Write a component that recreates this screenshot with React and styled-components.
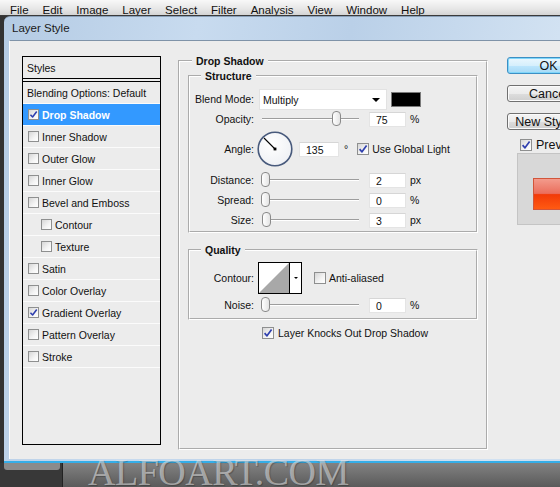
import styled, { createGlobalStyle } from "styled-components";

const GlobalStyle = createGlobalStyle`
  html, body {
    margin: 0;
    padding: 0;
  }
  body {
    width: 560px;
    height: 487px;
    overflow: hidden;
    background: #2d2d2d;
    font-family: "Liberation Sans", Arial, sans-serif;
  }
`;

const Screen = styled.div`
  position: relative;
  width: 560px;
  height: 487px;
  overflow: hidden;
  display: flex;
  flex-direction: column;
  background: #333;
`;

const MenuBar = styled.div`
  flex-shrink: 0;
  height: 15px;
  display: flex;
  gap: 14px;
  padding-left: 10px;
  overflow: hidden;
  background: linear-gradient(#f8f8f8, #e6e6e6 60%, #d4d4d4);
  border-bottom: 1px solid #3a3a3a;
  font-size: 11.5px;
  color: #111;
`;

const MenuItem = styled.span`
  padding-top: 4px;
  line-height: 12px;
`;

const Window = styled.div`
  flex-shrink: 0;
  margin-left: 4px;
  width: 620px;
  height: 447px;
  box-sizing: border-box;
  display: flex;
  flex-direction: column;
  padding: 0 0 2px 5px;
  border-radius: 6px 6px 0 0;
  border-top: 1px solid #8aa0b8;
  border-bottom: 2px solid #35aee8;
  background: linear-gradient(100deg, #b4cbe4 0%, #c8dbef 28%, #bad0e8 50%, #d2e2f2 80%, #c4d8ec 100%);
`;

const TitleBar = styled.div`
  height: 23px;
  display: flex;
  align-items: center;
  padding: 0 0 2px 3px;
  box-sizing: border-box;
  font-size: 11.5px;
  color: #1a1a1a;
`;

const Body = styled.div`
  flex: 1;
  display: flex;
  align-items: flex-start;
  padding: 14px 0 0 12px;
  background: #ececec;
  border-top: 1px solid #7f93a8;
  border-left: 1px solid #fdfdfd;
  font-size: 10.5px;
  color: #111;
`;

/* ---- styles list ---- */

const StylesPanel = styled.div`
  width: 139px;
  height: 389px;
  margin-top: 1px;
  box-sizing: border-box;
  border: 1px solid #000;
  display: flex;
  flex-direction: column;
`;

const StylesHeader = styled.div`
  height: 21px;
  display: flex;
  align-items: center;
  padding-left: 4px;
  border-bottom: 1px solid #000;
  margin-bottom: 2px;
`;

const StyleList = styled.div`
  flex: 1;
  border-top: 1px solid #000;
`;

const StyleRow = styled.div`
  height: 21px;
  display: flex;
  align-items: center;
  gap: 3px;
  padding-left: ${(p) => (p.$indent ? 18 : p.$plain ? 4 : 5)}px;
  border-bottom: 1px solid #fbfbfb;
  background: ${(p) => (p.$selected ? "#3399ff" : "transparent")};
  color: ${(p) => (p.$selected ? "#fff" : "#111")};
  font-weight: ${(p) => (p.$selected ? "bold" : "normal")};
`;

const Box = styled.span`
  flex-shrink: 0;
  width: ${(p) => p.$size}px;
  height: ${(p) => p.$size}px;
  box-sizing: border-box;
  border: 1px solid #8e8f8f;
  background: linear-gradient(135deg, #d6d6d6, #f4f4f4 60%, #ffffff);
  display: flex;
  align-items: center;
  justify-content: center;
`;

const Check = ({ checked, size = 12 }) => (
  <Box $size={size}>
    {checked && (
      <svg width={size - 2} height={size - 2} viewBox="0 0 10 10">
        <path
          d="M1.6 5.2 L4 7.8 L8.6 1.6"
          fill="none"
          stroke="#2f3fae"
          strokeWidth="1.7"
          strokeLinejoin="round"
        />
      </svg>
    )}
  </Box>
);

/* ---- groups ---- */

const Group = styled.fieldset`
  margin: ${(p) => p.$margin || "0"};
  padding: 0;
  min-width: 0;
  box-sizing: border-box;
  border: 2px groove #fff;
`;

const MainGroup = styled(Group)`
  width: 310px;
  height: 395px;
  margin-left: 17px;
`;

const Legend = styled.legend`
  margin-left: ${(p) => p.$offset}px;
  padding: 0 4px;
  line-height: 12px;
  font-weight: bold;
  color: #111;
`;

const GroupContent = styled.div`
  padding: ${(p) => p.$pad};
`;

const Row = styled.div`
  display: flex;
  align-items: center;
  height: ${(p) => p.$h}px;
  margin-top: ${(p) => p.$mt || 0}px;
`;

const Label = styled.span`
  width: 64px;
  flex-shrink: 0;
  text-align: right;
`;

const Select = styled.div`
  width: 128px;
  height: 21px;
  margin-left: 5px;
  box-sizing: border-box;
  display: flex;
  align-items: center;
  justify-content: space-between;
  padding: 1px 6px 0 3px;
  background: #fff;
  border: 1px solid #e2e2e2;
`;

const Arrow = styled.span`
  width: 0;
  height: 0;
  border-left: ${(p) => p.$w}px solid transparent;
  border-right: ${(p) => p.$w}px solid transparent;
  border-top: ${(p) => p.$w}px solid #000;
`;

const Swatch = styled.span`
  width: 30px;
  height: 15px;
  margin-left: 4px;
  box-sizing: border-box;
  background: #000;
  border: 1px solid #7a7a7a;
`;

const SliderWrap = styled.div`
  position: relative;
  width: 102px;
  height: 18px;
  margin-left: 5px;
  display: flex;
  align-items: center;
`;

const Track = styled.div`
  flex: 1;
  margin: 0 2px 0 3px;
  height: 1px;
  background: #9d9d9d;
  border-bottom: 1px solid #fff;
`;

const Thumb = styled.span`
  position: absolute;
  top: 1px;
  width: 9px;
  height: 15px;
  box-sizing: border-box;
  border: 1px solid #8a8a8a;
  border-radius: 4px;
  background: linear-gradient(90deg, #ffffff, #e4e4e4);
`;

const Slider = ({ pct }) => (
  <SliderWrap>
    <Track />
    <Thumb style={{ left: 2 + pct * 95 }} />
  </SliderWrap>
);

const ValueBox = styled.input`
  width: ${(p) => p.$w}px;
  height: 15px;
  margin-left: ${(p) => p.$ml}px;
  box-sizing: border-box;
  padding: 1px 0 0 6px;
  border: 1px solid #e4e4e4;
  border-top-color: #d6d6d6;
  background: #fff;
  font-family: inherit;
  font-size: 10.5px;
  color: #111;
  outline: none;
`;

const Unit = styled.span`
  margin-left: ${(p) => p.$ml || 4}px;
`;

const Dial = styled.svg`
  margin-left: 3px;
  flex-shrink: 0;
`;

const CheckLabel = styled.span`
  display: flex;
  align-items: center;
  gap: ${(p) => p.$gap || 3}px;
  margin-left: ${(p) => p.$ml || 0}px;
`;

const ContourBox = styled.div`
  display: flex;
  height: 32px;
  margin-left: 4px;
  box-sizing: border-box;
  border: 1px solid #000;
  background: #fff;
`;

const ContourPick = styled.div`
  width: 11px;
  display: flex;
  align-items: center;
  justify-content: center;
  border-left: 1px solid #000;
`;

/* ---- buttons ---- */

const ButtonColumn = styled.div`
  width: 83px;
  margin-left: 19px;
  margin-top: 2px;
  display: flex;
  flex-direction: column;
  gap: 11px;
`;

const Button = styled.div`
  height: 17px;
  box-sizing: border-box;
  display: flex;
  align-items: center;
  justify-content: center;
  border-radius: 3px;
  font-size: 12.5px;
  color: #111;
  border: 1px solid ${(p) => (p.$primary ? "#3c8fc4" : "#707070")};
  background: ${(p) =>
    p.$primary
      ? "linear-gradient(#eaf7fe, #d6effc 50%, #bde6fd 51%, #a6d9f5)"
      : "linear-gradient(#f4f4f4, #ebebeb 50%, #dddddd 51%, #cfcfcf)"};
  box-shadow: ${(p) => (p.$primary ? "inset 0 0 0 1px #7fd6fa" : "inset 0 0 0 1px #fbfbfb")};
`;

const PreviewRow = styled.div`
  margin-top: -3px;
  padding-left: 13px;
  font-size: 12.5px;
`;

const PreviewBox = styled.div`
  margin: -10px 0 0 10px;
  width: 80px;
  height: 72px;
  box-sizing: border-box;
  padding: 24px 0 0 15px;
  background: #d8d8d8;
  border: 1px solid #c4c4c4;
`;

const PreviewSwatch = styled.div`
  width: 60px;
  height: 32px;
  box-sizing: border-box;
  border: 1px solid #d2553a;
  background: linear-gradient(#f39b8c 0%, #eb6e5c 48%, #f23a08 52%, #ff5a12 100%);
`;

/* ---- workspace below ---- */

const BottomStrip = styled.div`
  flex: 1;
  display: flex;
`;

const Dock = styled.div`
  width: 62px;
  background: #383838;
  border-right: 1px solid #222;
`;

const DockTab = styled.div`
  height: 7px;
  margin: 0 2px 0 4px;
  border-radius: 0 0 3px 3px;
  background: #8b8b8b;
`;

const Canvas = styled.div`
  flex: 1;
  background: linear-gradient(#828282, #5a5a5a);
`;

const Watermark = styled.div`
  position: absolute;
  left: 88px;
  top: 450px;
  font-family: "Liberation Serif", "Times New Roman", serif;
  font-size: 38px;
  letter-spacing: -0.5px;
  color: rgba(235, 235, 235, 0.55);
  text-shadow: 1px 1px 1px rgba(0, 0, 0, 0.25);
  pointer-events: none;
`;

const menus = ["File", "Edit", "Image", "Layer", "Select", "Filter", "Analysis", "View", "Window", "Help"];

const styles = [
  { name: "Drop Shadow", checked: true, selected: true },
  { name: "Inner Shadow" },
  { name: "Outer Glow" },
  { name: "Inner Glow" },
  { name: "Bevel and Emboss" },
  { name: "Contour", indent: true },
  { name: "Texture", indent: true },
  { name: "Satin" },
  { name: "Color Overlay" },
  { name: "Gradient Overlay", checked: true },
  { name: "Pattern Overlay" },
  { name: "Stroke" },
];

const sliders = [
  { label: "Distance:", value: "2", unit: "px", pct: 0, mt: 3 },
  { label: "Spread:", value: "0", unit: "%", pct: 0, mt: 2 },
  { label: "Size:", value: "3", unit: "px", pct: 0.012, mt: 2 },
];

const App = () => {
  return (
    <Screen>
      <GlobalStyle />
      <MenuBar>
        {menus.map((m) => (
          <MenuItem key={m}>{m}</MenuItem>
        ))}
      </MenuBar>

      <Window>
        <TitleBar>Layer Style</TitleBar>
        <Body>
          <StylesPanel>
            <StylesHeader>Styles</StylesHeader>
            <StyleList>
              <StyleRow $plain>Blending Options: Default</StyleRow>
              {styles.map((s) => (
                <StyleRow key={s.name} $indent={s.indent} $selected={s.selected}>
                  <Check checked={s.checked} size={11} />
                  {s.name}
                </StyleRow>
              ))}
            </StyleList>
          </StylesPanel>

          <MainGroup>
            <Legend $offset={12}>Drop Shadow</Legend>
            <GroupContent $pad="3px 8px 0 8px">
              <Group>
                <Legend $offset={11}>Structure</Legend>
                <GroupContent $pad="0 0 2px 0">
                  <Row $h={22} $mt={6}>
                    <Label>Blend Mode:</Label>
                    <Select>
                      Multiply
                      <Arrow $w={4} />
                    </Select>
                    <Swatch />
                  </Row>
                  <Row $h={18}>
                    <Label>Opacity:</Label>
                    <Slider pct={0.75} />
                    <ValueBox readOnly value="75" $w={37} $ml={8} />
                    <Unit>%</Unit>
                  </Row>
                  <Row $h={38} $mt={2}>
                    <Label>Angle:</Label>
                    <Dial width="36" height="36" viewBox="0 0 36 36">
                      <defs>
                        <radialGradient id="dialFill" cx="0.4" cy="0.35" r="0.7">
                          <stop offset="0" stopColor="#ffffff" />
                          <stop offset="1" stopColor="#eef0f4" />
                        </radialGradient>
                      </defs>
                      <circle cx="18" cy="18" r="16.8" fill="url(#dialFill)" stroke="#485a7c" strokeWidth="1.6" />
                      <line x1="18" y1="18" x2="7" y2="7" stroke="#000" strokeWidth="1.1" />
                      <rect x="16.6" y="16.6" width="2.8" height="2.8" fill="#000" />
                    </Dial>
                    <ValueBox readOnly value="135" $w={40} $ml={6} />
                    <Unit $ml={5}>°</Unit>
                    <CheckLabel $ml={9}>
                      <Check checked />
                      Use Global Light
                    </CheckLabel>
                  </Row>
                  {sliders.map((s) => (
                    <Row key={s.label} $h={18} $mt={s.mt}>
                      <Label>{s.label}</Label>
                      <Slider pct={s.pct} />
                      <ValueBox readOnly value={s.value} $w={37} $ml={8} />
                      <Unit>{s.unit}</Unit>
                    </Row>
                  ))}
                </GroupContent>
              </Group>

              <Group $margin="11px 0 0 0">
                <Legend $offset={11}>Quality</Legend>
                <GroupContent $pad="0 0 5px 0">
                  <Row $h={32} $mt={6}>
                    <Label>Contour:</Label>
                    <ContourBox>
                      <svg width="30" height="30" viewBox="0 0 30 30">
                        <polygon points="0,30 30,0 30,30" fill="#a8a8a8" />
                      </svg>
                      <ContourPick>
                        <Arrow $w={2.5} />
                      </ContourPick>
                    </ContourBox>
                    <CheckLabel $ml={12}>
                      <Check />
                      Anti-aliased
                    </CheckLabel>
                  </Row>
                  <Row $h={16} $mt={3}>
                    <Label>Noise:</Label>
                    <Slider pct={0} />
                    <ValueBox readOnly value="0" $w={37} $ml={8} />
                    <Unit>%</Unit>
                  </Row>
                </GroupContent>
              </Group>

              <Row $h={12} $mt={7}>
                <CheckLabel $ml={74} $gap={4}>
                  <Check checked />
                  Layer Knocks Out Drop Shadow
                </CheckLabel>
              </Row>
            </GroupContent>
          </MainGroup>

          <ButtonColumn>
            <Button $primary>OK</Button>
            <Button>Cancel</Button>
            <Button>New Style...</Button>
            <PreviewRow>
              <CheckLabel $gap={4}>
                <Check checked />
                Preview
              </CheckLabel>
            </PreviewRow>
            <PreviewBox>
              <PreviewSwatch />
            </PreviewBox>
          </ButtonColumn>
        </Body>
      </Window>

      <BottomStrip>
        <Dock>
          <DockTab />
        </Dock>
        <Canvas />
      </BottomStrip>

      <Watermark>ALFOART.COM</Watermark>
    </Screen>
  );
};

export default App;
